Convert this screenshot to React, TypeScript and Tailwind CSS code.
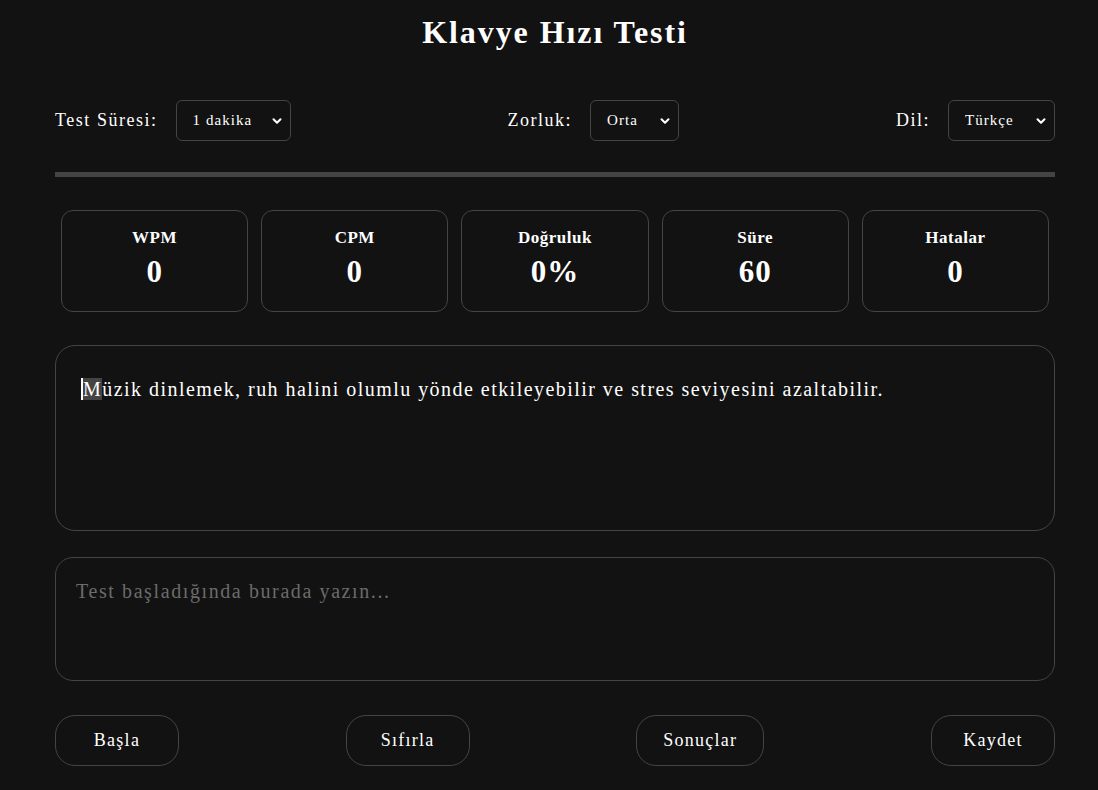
import React from 'react';
import { ChevronDown } from 'lucide-react';

const serif = { fontFamily: '"Liberation Serif", "DejaVu Serif", serif' };

const Select = ({ value, width }: { value: string; width: string }) => (
    <div className={`relative ${width}`}>
        <select
            defaultValue={value}
            className="w-full h-[41px] appearance-none bg-[#121212] text-white text-[15px] tracking-[0.07em] pl-[16px] pr-8 border border-[#444] rounded-[6px] outline-none"
            style={serif}
        >
            <option>{value}</option>
        </select>
        <ChevronDown className="absolute right-[7px] top-[14px] text-white pointer-events-none" size={14} strokeWidth={3.5} />
    </div>
);

const stats = [
    { label: 'WPM', value: '0' },
    { label: 'CPM', value: '0' },
    { label: 'Doğruluk', value: '0%' },
    { label: 'Süre', value: '60' },
    { label: 'Hatalar', value: '0' },
];

const buttons = ['Başla', 'Sıfırla', 'Sonuçlar', 'Kaydet'];

export default function App() {
    const sentence = 'Müzik dinlemek, ruh halini olumlu yönde etkileyebilir ve stres seviyesini azaltabilir.';
    return (
        <div className="min-h-screen bg-[#121212] text-white" style={serif}>
            <div className="ml-[55px] w-[1000px] pt-[12px]">
                <h1 className="text-center text-[32px] leading-[40px] font-bold tracking-[0.06em]">Klavye Hızı Testi</h1>

                <div className="mt-[48px] flex items-center justify-between text-[18px] tracking-[0.085em]">
                    <div className="flex items-center gap-[18px]">
                        <span>Test Süresi:</span>
                        <Select value="1 dakika" width="w-[115px]" />
                    </div>
                    <div className="flex items-center gap-[18px]">
                        <span>Zorluk:</span>
                        <Select value="Orta" width="w-[89px]" />
                    </div>
                    <div className="flex items-center gap-[18px]">
                        <span>Dil:</span>
                        <Select value="Türkçe" width="w-[107px]" />
                    </div>
                </div>

                <div className="mt-[31px] h-[5px] bg-[#444]"></div>

                <div className="mt-[33px] flex gap-[13px] px-[6px]">
                    {stats.map((s) => (
                        <div key={s.label} className="flex-1 h-[102px] border border-[#444] rounded-[12px] flex flex-col items-center pt-[17px]">
                            <div className="text-[17px] font-bold leading-[20px] tracking-[0.03em]">{s.label}</div>
                            <div className="text-[31px] font-bold leading-[36px] mt-[6px] tracking-[0.03em]">{s.value}</div>
                        </div>
                    ))}
                </div>

                <div className="mt-[33px] h-[186px] border border-[#444] rounded-[20px] px-[25px] pt-[28px] text-[20px] leading-[30px] tracking-[0.073em]">
                    <span className="bg-[#444] border-l-2 border-white">{sentence[0]}</span>
                    {sentence.slice(1)}
                </div>

                <textarea
                    className="mt-[26px] block w-full h-[124px] bg-[#121212] border border-[#444] rounded-[18px] px-[20px] pt-[18px] text-[20px] tracking-[0.08em] text-white placeholder:text-[#6b6b6b] outline-none resize-none"
                    style={serif}
                    placeholder="Test başladığında burada yazın..."
                />

                <div className="mt-[34px] flex justify-between">
                    {buttons.map((b) => (
                        <button
                            key={b}
                            className="h-[51px] px-[26px] min-w-[124px] border border-[#444] rounded-[20px] bg-[#121212] text-white text-[18px] tracking-[0.07em]"
                            style={serif}
                        >
                            {b}
                        </button>
                    ))}
                </div>
            </div>
        </div>
    );
}
